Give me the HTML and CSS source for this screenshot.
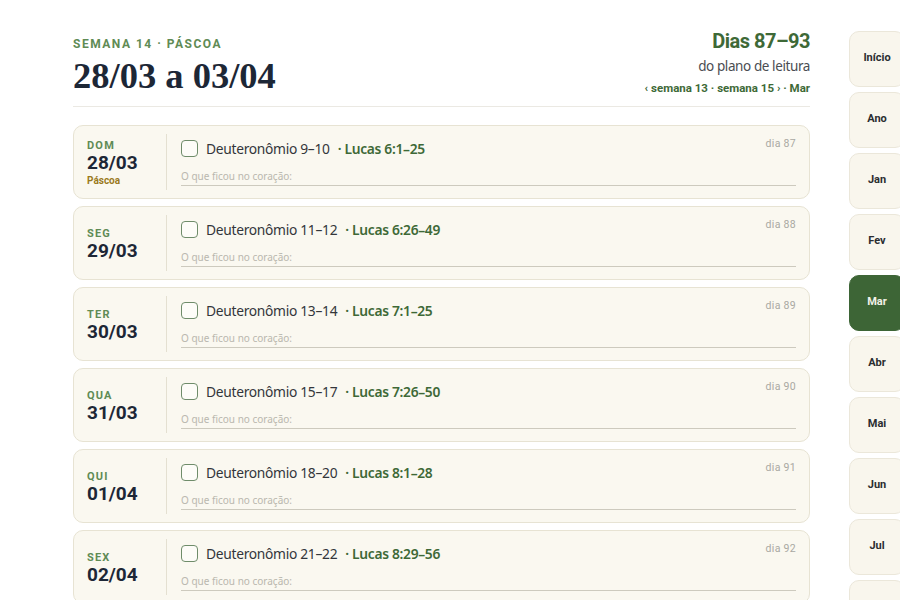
FILE: index.html
```html
<!DOCTYPE html>
<html lang="pt-BR">
<head>
<meta charset="utf-8">
<title>Semana 14 · Páscoa</title>
<link rel="stylesheet" href="styles.css">
</head>
<body>
<div class="page">
  <main class="week">
    <header class="week-head">
      <div class="head-left">
        <div class="eyebrow">SEMANA 14 · PÁSCOA</div>
        <h1 class="title">28/03 a 03/04</h1>
      </div>
      <div class="head-right">
        <div class="range">Dias 87–93</div>
        <div class="range-sub">do plano de leitura</div>
        <nav class="week-nav"><a>‹ semana 13</a> · <a>semana 15 ›</a> · <a>Mar</a></nav>
      </div>
    </header>

    <section class="days">
      <article class="day">
        <div class="day-date">
          <span class="dow">DOM</span>
          <span class="date">28/03</span>
          <span class="feast">Páscoa</span>
        </div>
        <div class="day-body">
          <div class="reading">
            <span class="check"></span>
            <span class="ot">Deuteronômio 9–10</span>
            <span class="nt">· Lucas 6:1–25</span>
            <span class="daynum">dia 87</span>
          </div>
          <div class="note">O que ficou no coração:</div>
        </div>
      </article>

      <article class="day">
        <div class="day-date">
          <span class="dow">SEG</span>
          <span class="date">29/03</span>
        </div>
        <div class="day-body">
          <div class="reading">
            <span class="check"></span>
            <span class="ot">Deuteronômio 11–12</span>
            <span class="nt">· Lucas 6:26–49</span>
            <span class="daynum">dia 88</span>
          </div>
          <div class="note">O que ficou no coração:</div>
        </div>
      </article>

      <article class="day">
        <div class="day-date">
          <span class="dow">TER</span>
          <span class="date">30/03</span>
        </div>
        <div class="day-body">
          <div class="reading">
            <span class="check"></span>
            <span class="ot">Deuteronômio 13–14</span>
            <span class="nt">· Lucas 7:1–25</span>
            <span class="daynum">dia 89</span>
          </div>
          <div class="note">O que ficou no coração:</div>
        </div>
      </article>

      <article class="day">
        <div class="day-date">
          <span class="dow">QUA</span>
          <span class="date">31/03</span>
        </div>
        <div class="day-body">
          <div class="reading">
            <span class="check"></span>
            <span class="ot">Deuteronômio 15–17</span>
            <span class="nt">· Lucas 7:26–50</span>
            <span class="daynum">dia 90</span>
          </div>
          <div class="note">O que ficou no coração:</div>
        </div>
      </article>

      <article class="day">
        <div class="day-date">
          <span class="dow">QUI</span>
          <span class="date">01/04</span>
        </div>
        <div class="day-body">
          <div class="reading">
            <span class="check"></span>
            <span class="ot">Deuteronômio 18–20</span>
            <span class="nt">· Lucas 8:1–28</span>
            <span class="daynum">dia 91</span>
          </div>
          <div class="note">O que ficou no coração:</div>
        </div>
      </article>

      <article class="day">
        <div class="day-date">
          <span class="dow">SEX</span>
          <span class="date">02/04</span>
        </div>
        <div class="day-body">
          <div class="reading">
            <span class="check"></span>
            <span class="ot">Deuteronômio 21–22</span>
            <span class="nt">· Lucas 8:29–56</span>
            <span class="daynum">dia 92</span>
          </div>
          <div class="note">O que ficou no coração:</div>
        </div>
      </article>
    </section>
  </main>

  <aside class="tabs">
    <a class="tab">Início</a>
    <a class="tab">Ano</a>
    <a class="tab">Jan</a>
    <a class="tab">Fev</a>
    <a class="tab active">Mar</a>
    <a class="tab">Abr</a>
    <a class="tab">Mai</a>
    <a class="tab">Jun</a>
    <a class="tab">Jul</a>
    <a class="tab">Ago</a>
  </aside>
</div>
</body>
</html>
```

FILE: styles.css
```css
html, body {
  margin: 0;
  padding: 0;
  height: 100%;
  overflow: hidden;
  background: #ffffff;
}

body {
  font-family: "Noto Sans", "Open Sans", sans-serif;
  color: #2f3136;
}

.page {
  display: flex;
  align-items: flex-start;
  width: 960px;
}

/* main week column */
.week {
  width: 737px;
  margin-left: 73px;
  padding-top: 28px;
  flex: none;
}

.week-head {
  display: flex;
  justify-content: space-between;
  align-items: flex-end;
  padding-bottom: 10px;
  border-bottom: 1px solid #ebe9e3;
}

.eyebrow {
  font-family: Roboto, "Noto Sans", sans-serif;
  font-weight: 700;
  font-size: 12px;
  line-height: 16px;
  letter-spacing: 1.5px;
  color: #5f8b55;
}

.title {
  margin: 4px 0 0;
  font-family: "Liberation Serif", "Times New Roman", serif;
  font-weight: 700;
  font-size: 36.5px;
  line-height: 40px;
  color: #1d2736;
}

.head-right {
  text-align: right;
  display: flex;
  flex-direction: column;
  align-items: flex-end;
}

.range {
  font-family: Roboto, "Noto Sans", sans-serif;
  font-weight: 700;
  font-size: 20px;
  line-height: 26px;
  letter-spacing: -0.5px;
  color: #3e6937;
}

.range-sub {
  margin-top: 3px;
  font-size: 13.5px;
  line-height: 18px;
  letter-spacing: -0.4px;
  color: #4a4d52;
}

.week-nav {
  margin-top: 5px;
  font-family: Roboto, "Noto Sans", sans-serif;
  font-weight: 700;
  font-size: 11.5px;
  line-height: 16px;
  color: #3e6937;
}

.week-nav a {
  color: inherit;
}

/* day cards */
.days {
  display: flex;
  flex-direction: column;
  gap: 7px;
  margin-top: 18px;
}

.day {
  display: flex;
  height: 74px;
  box-sizing: border-box;
  padding: 8px 13px 0 13px;
  background: #faf8f0;
  border: 1px solid #e7e3d3;
  border-radius: 10px;
}

.day-date {
  width: 80px;
  flex: none;
  display: flex;
  flex-direction: column;
  justify-content: center;
  margin-bottom: 8px;
  padding-top: 2px;
  box-sizing: border-box;
  border-right: 1px solid #e4e0d1;
}

.dow {
  font-family: Roboto, "Noto Sans", sans-serif;
  font-weight: 700;
  font-size: 11px;
  line-height: 13px;
  letter-spacing: 1.2px;
  color: #5f8b55;
}

.date {
  font-family: Roboto, "Noto Sans", sans-serif;
  font-weight: 700;
  font-size: 19px;
  line-height: 22px;
  color: #1d2736;
}

.feast {
  margin-top: 1px;
  font-family: Roboto, "Noto Sans", sans-serif;
  font-weight: 700;
  font-size: 10px;
  line-height: 12px;
  color: #9a7a1c;
}

.day-body {
  flex: 1;
  padding-left: 14px;
  display: flex;
  flex-direction: column;
}

.reading {
  display: flex;
  align-items: center;
  height: 26px;
  margin-top: 1px;
}

.check {
  width: 17px;
  height: 17px;
  box-sizing: border-box;
  border: 1.6px solid #6f8c6a;
  border-radius: 4px;
  background: #fdfcf8;
  margin-right: 8px;
  flex: none;
}

.ot {
  font-size: 13.8px;
  letter-spacing: -0.3px;
  color: #33363b;
}

.nt {
  margin-left: 8px;
  font-size: 13.8px;
  letter-spacing: -0.3px;
  font-weight: 600;
  color: #3e6937;
}

.daynum {
  margin-left: auto;
  align-self: flex-start;
  margin-top: 2px;
  font-family: Roboto, "Noto Sans", sans-serif;
  font-size: 10.5px;
  letter-spacing: 0.3px;
  color: #a9a8a2;
}

.note {
  margin-top: 6px;
  height: 18px;
  font-size: 10px;
  line-height: 18px;
  color: #b9b7ae;
  border-bottom: 1px solid #cdcabe;
}

/* month tabs */
.tabs {
  flex: none;
  margin-left: 39px;
  padding-top: 31px;
  display: flex;
  flex-direction: column;
  gap: 5px;
}

.tab {
  width: 56px;
  height: 56px;
  box-sizing: border-box;
  display: flex;
  align-items: center;
  justify-content: center;
  padding-bottom: 3px;
  background: #f9f6ed;
  border: 1px solid #ebe7da;
  border-radius: 10px;
  font-family: Roboto, "Noto Sans", sans-serif;
  font-weight: 700;
  font-size: 11px;
  color: #2b2d30;
}

.tab.active {
  background: #3d6536;
  border-color: #3d6536;
  color: #f3f1e8;
}
```
